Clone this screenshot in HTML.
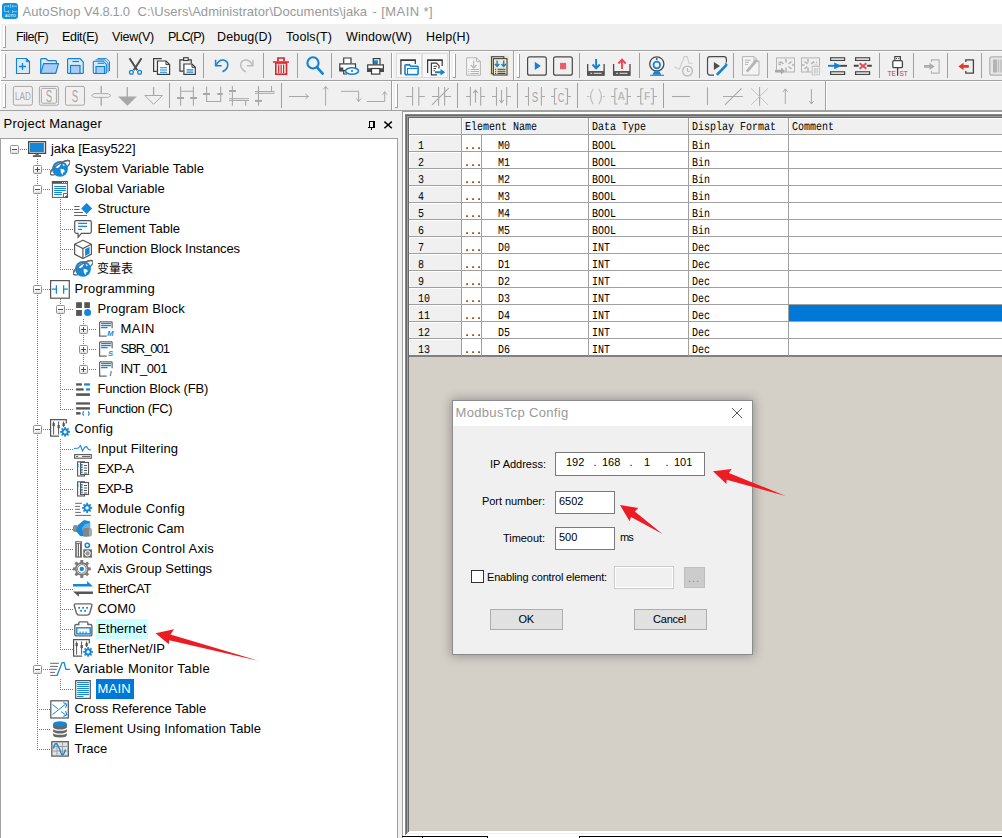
<!DOCTYPE html>
<html><head><meta charset="utf-8"><title>AutoShop</title>
<style>
html,body{margin:0;padding:0}
body{width:1002px;height:838px;position:relative;overflow:hidden;background:#f0f0f0;font-family:"Liberation Sans","Noto Sans CJK SC",sans-serif;color:#000}
div,span,svg{position:absolute;box-sizing:border-box}
.t{white-space:pre;line-height:1}
.tr{font-size:13px;white-space:pre;line-height:16px;height:16px}
.mono{font-family:"Liberation Mono",monospace;font-size:10px;white-space:pre;line-height:12px;text-rendering:geometricPrecision;transform:scaleY(1.2);transform-origin:0 100%;letter-spacing:0}
.vs{width:1px;background:#a0a0a0}
.dl{font-size:11px;white-space:pre;line-height:13px}
.hd{height:1px;background:repeating-linear-gradient(90deg,#7a7a7a 0,#7a7a7a 1px,transparent 1px,transparent 2px)}
.vd{width:1px;background:repeating-linear-gradient(180deg,#7a7a7a 0,#7a7a7a 1px,transparent 1px,transparent 2px)}
.box{width:9px;height:9px;border:1px solid #919191;background:linear-gradient(#fff 45%,#dedede);border-radius:1.5px}
.box i{position:absolute;left:1px;top:3px;width:5px;height:1px;background:#2d4d9e}
.box b{position:absolute;left:3px;top:1px;width:1px;height:5px;background:#2d4d9e}
</style></head><body>

<div style="left:0;top:0;width:1002px;height:24px;background:#fff"></div>
<svg style="left:2px;top:3px" width="16" height="16" viewBox="0 0 16 16" ><rect x="0" y="0" width="16" height="16" rx="3" fill="#0f93de"/><path d="M2.400 3.200H6.600M6.600 2V4.400M8.500 1.200V4.700M10.500 2V4.400M10.500 3.200H15M2.400 3.200V8.600H6.600M6.600 7.300V9.900M10.500 7.300V9.900M10.500 8.600H15" stroke="#9bd6f5" stroke-width="0.800" fill="none"/><text x="8.300" y="13.900" font-family="Liberation Sans,sans-serif" font-weight="bold" font-size="3.900" fill="#d4eefb" text-anchor="middle">AUTO</text></svg>
<span class="t" style="left:22.5px;top:4.5px;font-size:13px;color:#999;letter-spacing:0.112px">AutoShop</span>
<span class="t" style="left:84.0px;top:4.5px;font-size:13px;color:#999;letter-spacing:-0.366px">V4.8.1.0</span>
<span class="t" style="left:137.5px;top:4.5px;font-size:13px;color:#999;letter-spacing:0.052px">C:\Users\Administrator\Documents\jaka</span>
<span class="t" style="left:372.5px;top:4.5px;font-size:13px;color:#999;letter-spacing:0.416px">- [MAIN *]</span>
<div style="left:1px;top:24px;width:1001px;height:26px;background:#f0f0f0"></div>
<div style="left:0;top:24px;width:1px;height:86px;background:#fff"></div>
<div style="left:3px;top:26px;width:2px;height:21px;background:#fff"></div><div style="left:5px;top:26px;width:1px;height:22px;background:#a0a0a0"></div><div style="left:3px;top:47px;width:3px;height:1px;background:#a0a0a0"></div>
<span class="t" style="left:16px;top:30.5px;font-size:12.5px;letter-spacing:-0.586px">File(F)</span>
<span class="t" style="left:62px;top:30.5px;font-size:12.5px;letter-spacing:-0.315px">Edit(E)</span>
<span class="t" style="left:112px;top:30.5px;font-size:12.5px;letter-spacing:-0.219px">View(V)</span>
<span class="t" style="left:168px;top:30.5px;font-size:12.5px;letter-spacing:-0.830px">PLC(P)</span>
<span class="t" style="left:217px;top:30.5px;font-size:12.5px;letter-spacing:0.101px">Debug(D)</span>
<span class="t" style="left:286px;top:30.5px;font-size:12.5px;letter-spacing:0.107px">Tools(T)</span>
<span class="t" style="left:346px;top:30.5px;font-size:12.5px;letter-spacing:0.157px">Window(W)</span>
<span class="t" style="left:426px;top:30.5px;font-size:12.5px;letter-spacing:0.134px">Help(H)</span>
<div style="left:1px;top:50px;width:1001px;height:1px;background:#a0a0a0"></div>
<div style="left:1px;top:51px;width:1001px;height:1px;background:#fcfcfc"></div>
<div style="left:1px;top:80px;width:1001px;height:1px;background:#a0a0a0"></div>
<div style="left:1px;top:81px;width:1001px;height:1px;background:#fcfcfc"></div>
<div style="left:0px;top:110px;width:402px;height:1px;background:#a0a0a0"></div>
<div style="left:402px;top:110px;width:600px;height:2px;background:#a0a0a0"></div>
<div style="left:3px;top:54px;width:2px;height:23px;background:#fff"></div><div style="left:5px;top:54px;width:1px;height:24px;background:#a0a0a0"></div><div style="left:3px;top:77px;width:3px;height:1px;background:#a0a0a0"></div>
<div class="vs" style="left:117px;top:53px;height:25px"></div>
<div class="vs" style="left:203px;top:53px;height:25px"></div>
<div class="vs" style="left:263px;top:53px;height:25px"></div>
<div class="vs" style="left:297px;top:53px;height:25px"></div>
<div class="vs" style="left:331px;top:53px;height:25px"></div>
<div class="vs" style="left:579px;top:53px;height:25px"></div>
<div class="vs" style="left:639px;top:53px;height:25px"></div>
<div class="vs" style="left:699px;top:53px;height:25px"></div>
<div class="vs" style="left:733px;top:53px;height:25px"></div>
<div class="vs" style="left:767px;top:53px;height:25px"></div>
<div class="vs" style="left:879px;top:53px;height:25px"></div>
<div class="vs" style="left:913px;top:53px;height:25px"></div>
<div class="vs" style="left:947px;top:53px;height:25px"></div>
<div class="vs" style="left:981px;top:53px;height:25px"></div>
<div style="left:391px;top:53px;width:1px;height:25px;background:#a0a0a0"></div><div style="left:392px;top:53px;width:1px;height:25px;background:#fff"></div>
<div style="left:396px;top:53px;width:26px;height:25px;background:#f7f7f7;border:1px solid #dcdcdc"></div>
<div style="left:422px;top:53px;width:26px;height:25px;background:#f7f7f7;border:1px solid #dcdcdc"></div>
<div style="left:449px;top:51px;width:1px;height:29px;background:#a0a0a0"></div><div style="left:450px;top:51px;width:1px;height:29px;background:#fff"></div>
<div style="left:453px;top:54px;width:2px;height:23px;background:#fff"></div><div style="left:455px;top:54px;width:1px;height:24px;background:#a0a0a0"></div><div style="left:453px;top:77px;width:3px;height:1px;background:#a0a0a0"></div>
<div style="left:513px;top:51px;width:1px;height:29px;background:#a0a0a0"></div><div style="left:514px;top:51px;width:1px;height:29px;background:#fff"></div>
<div style="left:517px;top:54px;width:2px;height:23px;background:#fff"></div><div style="left:519px;top:54px;width:1px;height:24px;background:#a0a0a0"></div><div style="left:517px;top:77px;width:3px;height:1px;background:#a0a0a0"></div>
<svg style="left:0px;top:50px" width="1002" height="30" viewBox="0 50 1002 30" ><path d="M16.5 58.5H26.5L29.5 61.5V73.5H16.5Z" stroke="#1282d6" fill="#d8e9f8" stroke-width="1.1" /><path d="M26.3 58.5V61.7H29.5Z" stroke="#1282d6" fill="#1282d6" stroke-width="0.6" /><path d="M22.5 63V70M19 66.5H26" stroke="#1282d6" fill="none" stroke-width="1.3" /><path d="M40.7 73V59.5Q40.700 58.600 41.600 58.600H46L48 60.600H55.500Q56.400 60.600 56.400 61.500V63.500" stroke="#1282d6" fill="#d8e9f8" stroke-width="1.2" /><path d="M40.800 73.400L43.600 63.600H58.500L55.700 73.400Z" stroke="#1282d6" fill="#a9cdf2" stroke-width="1.2" stroke-linejoin="round"/><path d="M68.500 58.600H80L83.300 62V72.500Q83.300 73.400 82.400 73.400H68.500Q67.600 73.400 67.600 72.500V59.500Q67.600 58.600 68.500 58.600Z" stroke="#1282d6" fill="#d8e9f8" stroke-width="1.2" /><rect x="70.5" y="65.5" width="9.5" height="8" rx="0" stroke="#1282d6" fill="#a9cdf2" stroke-width="1.2"/><path d="M72.500 61.500H79" stroke="#1282d6" fill="none" stroke-width="1.2" /><path d="M97.500 58.600H106.500L109.500 61.700V71" stroke="#1282d6" fill="#eaf3fb" stroke-width="1" /><path d="M95.500 59.900H105L108 62.900V72.500" stroke="#1282d6" fill="#eaf3fb" stroke-width="1" /><path d="M94.200 61.200H103.400L106.300 64.200V72.500Q106.300 73.400 105.400 73.400H94.200Q93.300 73.400 93.300 72.500V62.100Q93.300 61.200 94.200 61.200Z" stroke="#1282d6" fill="#d8e9f8" stroke-width="1.1" /><rect x="96" y="66.5" width="8.5" height="7" rx="0" stroke="#1282d6" fill="#a9cdf2" stroke-width="1.1"/><path d="M97.600 63.300H104" stroke="#1282d6" fill="none" stroke-width="1.1" /><path d="M129.500 58.200L137.300 70.200M141.500 58.200L133.700 70.200" stroke="#4d4d4d" fill="none" stroke-width="2" /><circle cx="131.4" cy="72.3" r="1.9" stroke="#1282d6" fill="none" stroke-width="1.3"/><circle cx="139.6" cy="72.3" r="1.9" stroke="#1282d6" fill="none" stroke-width="1.3"/><path d="M161.700 58.700H153.600V71.300H156.800" stroke="#3b3b3b" fill="none" stroke-width="1.2" /><path d="M157.500 61H166L169.600 64.600V74.400H157.500Z" stroke="#3b3b3b" fill="#fff" stroke-width="1.2" /><path d="M166 61V64.600H169.600" stroke="#3b3b3b" fill="none" stroke-width="1" /><path d="M160 67.800H167M160 70H167M160 72.200H167" stroke="#1282d6" fill="none" stroke-width="1.1" /><path d="M183.500 71.200H179.900V59.800H191.200V63.400" stroke="#3b3b3b" fill="none" stroke-width="1.2" /><rect x="183.6" y="57.7" width="4.6" height="2.8" rx="0" stroke="#3b3b3b" fill="#f0f0f0" stroke-width="1.1"/><path d="M183.900 64H192L195.300 67.300V74.400H183.900Z" stroke="#3b3b3b" fill="#fff" stroke-width="1.2" /><path d="M192 64V67.300H195.300" stroke="#3b3b3b" fill="none" stroke-width="1" /><path d="M186.600 69.800H193.300M186.600 72.200H193.300" stroke="#1282d6" fill="none" stroke-width="1.2" /><path d="M216.200 65.300Q218.500 59.600 223.500 60Q228.800 61.300 227.600 66.500Q226.300 70.300 222.500 71.800" stroke="#1282d6" fill="none" stroke-width="1.5" /><path d="M215.600 59.800V65.800H221.600" stroke="#1282d6" fill="none" stroke-width="1.5" /><path d="M252.300 65.300Q250 59.600 245 60Q239.700 61.300 240.900 66.500Q242.200 70.300 246 71.800" stroke="#bcbcbc" fill="none" stroke-width="1.4" /><path d="M252.900 59.800V65.800H246.900" stroke="#bcbcbc" fill="none" stroke-width="1.4" /><path d="M272.900 62H289M278 61V58H284V61" stroke="#d9262c" fill="none" stroke-width="1.7" /><rect x="275.8" y="63" width="10.7" height="11.2" rx="0" stroke="#d9262c" fill="none" stroke-width="1.6"/><path d="M278.700 64.500V73M281.150 64.500V73M283.600 64.500V73" stroke="#d9262c" fill="none" stroke-width="1.2" /><circle cx="313" cy="62.9" r="5.6" stroke="#1282d6" fill="none" stroke-width="2.1"/><path d="M317.300 67.600L322.700 73.600" stroke="#1282d6" fill="none" stroke-width="2.6" stroke-linecap="round"/><path d="M343.700 63.400V58H351V63.400" stroke="#3b3b3b" fill="#fff" stroke-width="1.2" /><rect x="339.8" y="63.9" width="15.7" height="6.6" rx="0" stroke="#3b3b3b" fill="#fff" stroke-width="1.2"/><rect x="339.3" y="67.5" width="4" height="4" rx="0" stroke="none" fill="#4a4a4a" stroke-width="1"/><path d="M343.700 71V74H347" stroke="#3b3b3b" fill="none" stroke-width="1.2" /><ellipse cx="352" cy="71" rx="6.500" ry="3.300" fill="#fff" stroke="#1282d6" stroke-width="1.600"/><rect x="351.1" y="70.1" width="1.8" height="1.8" rx="0" stroke="none" fill="#1282d6" stroke-width="1"/><path d="M373.300 64.400V58.700H380V64.400" stroke="#3b3b3b" fill="#fff" stroke-width="1.2" /><rect x="373.9" y="60.3" width="4" height="4.1" rx="0" stroke="none" fill="#1282d6" stroke-width="1"/><rect x="367.7" y="64.9" width="15.7" height="6.4" rx="0" stroke="#3b3b3b" fill="#fff" stroke-width="1.2"/><rect x="367.1" y="68.2" width="4" height="3.6" rx="0" stroke="none" fill="#4a4a4a" stroke-width="1"/><rect x="380.1" y="68.2" width="3.9" height="3.6" rx="0" stroke="none" fill="#4a4a4a" stroke-width="1"/><rect x="371.5" y="68.5" width="8.3" height="5.6" rx="0" stroke="#3b3b3b" fill="#fff" stroke-width="1.2"/><path d="M400.900 74.500V60.500H415.300V64" stroke="#3b3b3b" fill="none" stroke-width="1.2" /><path d="M400.300 60.100H415.900" stroke="#3b3b3b" fill="none" stroke-width="1.7" /><path d="M405 74.500V65.800Q405 64.900 405.900 64.900H409.500L410.800 66.300H417.200Q418.100 66.300 418.100 67.200V74.500" stroke="#1282d6" fill="#fff" stroke-width="1.6" /><path d="M405 74.600H418.100" stroke="#1282d6" fill="none" stroke-width="1.6" /><path d="M407.500 74V68.500H417.500" stroke="#1282d6" fill="none" stroke-width="1.1" /><path d="M427.600 73V60.500H442.200V66" stroke="#3b3b3b" fill="none" stroke-width="1.2" /><path d="M427 60.100H442.800" stroke="#3b3b3b" fill="none" stroke-width="1.7" /><path d="M437 74.800H431.400V63.200H436.500L439 65.700V68.500" stroke="#3b3b3b" fill="#fff" stroke-width="1.2" /><path d="M433.500 66.300H437M433.500 68.500H436M433.500 70.700H435" stroke="#3b3b3b" fill="none" stroke-width="1" /><path d="M435 71.300H440.500V69L445.200 72.300L440.500 75.600V73.300H435Z" stroke="none" fill="#1282d6" stroke-width="1" /><path d="M466.600 57.800H476.500L480.400 61.700V75.200H466.600Z" stroke="#b4b4b4" fill="#f5f5f5" stroke-width="1" /><path d="M476.500 57.800V61.700H480.400" stroke="#b4b4b4" fill="none" stroke-width="1" /><path d="M473.700 60.500V67.800M470.800 65L473.700 68L476.600 65" stroke="#b4b4b4" fill="none" stroke-width="1.1" /><path d="M470.500 69.500H479M470.500 71.500H479M470.500 73.500H479M468.300 69.500H469.300M468.300 71.500H469.300M468.300 73.500H469.300" stroke="#b4b4b4" fill="none" stroke-width="1" /><rect x="489.5" y="55.7" width="19.3" height="20" rx="0" stroke="none" fill="#ece5c9" stroke-width="1"/><rect x="491.6" y="56.7" width="12.2" height="17" rx="0" stroke="#444" fill="#ece5c9" stroke-width="1.1"/><rect x="493.4" y="58.6" width="13.6" height="16.4" rx="0" stroke="#444" fill="#f1ebd3" stroke-width="1.1"/><path d="M497.100 60.500V66M494.900 64L497.100 66.400L499.300 64M503.700 60.500V66M501.500 64L503.700 66.400L505.900 64" stroke="#1282d6" fill="none" stroke-width="1.4" /><path d="M497.500 69.200H505.500M497.500 71.300H505.500M497.500 73.400H505.500M495 69.200H496.200M495 71.300H496.200M495 73.400H496.200" stroke="#444" fill="none" stroke-width="1.1" /><rect x="527.6" y="56.8" width="18.7" height="18.4" rx="2" stroke="#4a4a4a" fill="none" stroke-width="1.2"/><path d="M534.800 61.700L540.800 65.900L534.800 70.100Z" stroke="none" fill="#1282d6" stroke-width="1" /><rect x="553.6" y="56.8" width="18.7" height="18.4" rx="2" stroke="#4a4a4a" fill="none" stroke-width="1.2"/><rect x="560" y="62.9" width="6.1" height="6.3" rx="0" stroke="none" fill="#e9606b" stroke-width="1"/><path d="M587.7 64.100V75.100H604.1V64.100" stroke="#4a4a4a" fill="none" stroke-width="1.3" /><rect x="587.7" y="71" width="16.4" height="4.5" rx="0" stroke="none" fill="#555" stroke-width="1"/><path d="M590.2 73.300H592.2M593.7 73.300H601.7" stroke="#e4e4e4" fill="none" stroke-width="1" /><path d="M596.1 59V67" stroke="#1282d6" fill="none" stroke-width="1.9" /><path d="M592.5 64.500L596.1 68.400L599.7 64.500" stroke="#1282d6" fill="none" stroke-width="1.9" /><path d="M613.6 64.100V75.100H630V64.100" stroke="#4a4a4a" fill="none" stroke-width="1.3" /><rect x="613.6" y="71" width="16.4" height="4.5" rx="0" stroke="none" fill="#555" stroke-width="1"/><path d="M616.1 73.300H618.1M619.6 73.300H627.6" stroke="#e4e4e4" fill="none" stroke-width="1" /><path d="M622 60.500V69" stroke="#ef4450" fill="none" stroke-width="1.9" /><path d="M618.4 63.500L622 59.600L625.6 63.500" stroke="#ef4450" fill="none" stroke-width="1.9" /><circle cx="656.8" cy="63.9" r="7.1" stroke="#4a4a4a" fill="none" stroke-width="1.3"/><circle cx="656.8" cy="65" r="3.3" stroke="#1282d6" fill="none" stroke-width="1.7"/><circle cx="656.8" cy="59" r="0.9" stroke="none" fill="#4a4a4a" stroke-width="1"/><path d="M654.300 71.300H659.300L661.300 74.800H652.300Z" stroke="none" fill="#1282d6" stroke-width="1" /><path d="M650.200 75.300H664" stroke="#1282d6" fill="none" stroke-width="1.1" /><path d="M674.300 66.800L679.400 69.200L684.200 56.600H687.200L689 63.200H692.800" stroke="#cdcdcd" fill="none" stroke-width="1.1" /><circle cx="687.5" cy="71" r="4.9" stroke="#b9b9b9" fill="#f0f0f0" stroke-width="1.3"/><path d="M687.500 68V71.300H690" stroke="#b9b9b9" fill="none" stroke-width="1.1" /><path d="M714 75.100H710Q707.500 75.100 707.500 72.600V59.100Q707.500 56.600 710 56.600H723.900Q726.400 56.600 726.400 59.100V62.500" stroke="#4a4a4a" fill="none" stroke-width="1.2" /><path d="M713.900 62L720 66L713.900 70Z" stroke="none" fill="#4d4d4d" stroke-width="1" /><path d="M716.900 74.900L726.500 64.900" stroke="#1282d6" fill="none" stroke-width="2.7" /><path d="M725.200 63.300L727.200 65.300" stroke="#1282d6" fill="none" stroke-width="1.5" /><path d="M742.500 56.600H754L759 61.600V75.100H742.500Z" stroke="#b4b4b4" fill="#f4f4f4" stroke-width="1" /><path d="M745 60.200H750.600M745 62.300H749M745 64.400H748" stroke="#b4b4b4" fill="none" stroke-width="1" /><path d="M746.800 71.600L756.700 60" stroke="#b4b4b4" fill="none" stroke-width="2.7" /><path d="M754 56.600V61.600H759" stroke="#b4b4b4" fill="none" stroke-width="1" /><rect x="776.5" y="57.9" width="18" height="14.1" rx="0" stroke="#b4b4b4" fill="none" stroke-width="1"/><path d="M786 59V62.500M786 67.500V72M780.500 61.500L783.500 64M791.500 61.500L788.500 64M791.500 69L788.500 66.500M792 65H794M778.500 62.500H781M778.500 64.500H781" stroke="#b4b4b4" fill="none" stroke-width="1.5" /><path d="M775 69.800H781V67.500L785 71L781 74.500V72.200H775Z" stroke="none" fill="#a9a9a9" stroke-width="1" /><rect x="801.5" y="57.9" width="18" height="14.1" rx="0" stroke="#b4b4b4" fill="none" stroke-width="1"/><path d="M808 59V62.500M808 67.500V72M804.500 61.500L807.500 64M814 61.500L811 64M804.500 69L807 66.500M802 65H804.500M812 62.500H814.500M816 62.500H817" stroke="#b4b4b4" fill="none" stroke-width="1.5" /><rect x="812.2" y="66.5" width="7.2" height="8.3" rx="0" stroke="#c6c6c6" fill="#f0f0f0" stroke-width="1"/><path d="M811.500 66.500H820M814 66V65H817.500V66M814.400 68V73.500M815.800 68V73.500M817.300 68V73.500" stroke="#c6c6c6" fill="none" stroke-width="0.9" /><rect x="830.6" y="57.8" width="14" height="2.6" rx="0" stroke="#444" fill="#fff" stroke-width="1.2"/><rect x="830.6" y="71.8" width="14" height="2.6" rx="0" stroke="#444" fill="#fff" stroke-width="1.2"/><path d="M839.500 65.800H847" stroke="#444" fill="none" stroke-width="1.9" /><path d="M828 65.800H836" stroke="#1282d6" fill="none" stroke-width="1.9" /><path d="M834.200 62.400L841.500 65.800L834.200 69.300Z" stroke="none" fill="#1282d6" stroke-width="1" /><rect x="855.6" y="57.8" width="14" height="2.6" rx="0" stroke="#444" fill="#fff" stroke-width="1.2"/><rect x="855.6" y="71.8" width="14" height="2.6" rx="0" stroke="#444" fill="#fff" stroke-width="1.2"/><path d="M853.800 65.800H858.600M867.200 65.800H871.800" stroke="#444" fill="none" stroke-width="1.9" /><path d="M859.600 63.300L866.400 68.800M866.400 63.300L859.600 68.800" stroke="#e05058" fill="none" stroke-width="2" /><rect x="894.8" y="56.6" width="5.6" height="4" rx="0" stroke="#444" fill="#fff" stroke-width="1.2"/><rect x="896" y="58" width="1.1" height="1.1" rx="0" stroke="none" fill="#444" stroke-width="1"/><rect x="898.2" y="58" width="1.1" height="1.1" rx="0" stroke="none" fill="#444" stroke-width="1"/><rect x="892.8" y="60.6" width="9.6" height="7" rx="1.2" stroke="#444" fill="#fff" stroke-width="1.3"/><path d="M897.600 67.600V75.700" stroke="#444" fill="none" stroke-width="1.3" /><text transform="translate(891.7 75.8) scale(1 1)" font-family="Liberation Sans,sans-serif" font-size="6.6" font-weight="normal" fill="#e8242e" text-anchor="middle">TE</text><text transform="translate(903.6 75.8) scale(1 1)" font-family="Liberation Sans,sans-serif" font-size="6.6" font-weight="normal" fill="#e8242e" text-anchor="middle">ST</text><path d="M931.500 62V59.900H939.100V73.100H931.500V71" stroke="#b4b4b4" fill="none" stroke-width="1.2" /><path d="M924 65H929.500V62.800L934.700 66.400L929.500 70V67.800H924Z" stroke="none" fill="#adadad" stroke-width="1" /><path d="M965.800 62V59.900H973.400V73.100H965.800V71" stroke="#444" fill="none" stroke-width="1.3" /><path d="M968.800 65H963.500V62.800L958.300 66.400L963.500 70V67.800H968.800Z" stroke="none" fill="#e73828" stroke-width="1" /><rect x="989.8" y="56.8" width="20" height="18.4" rx="2" stroke="#b0b0b0" fill="#e6e6e6" stroke-width="1.2"/><rect x="993" y="59.5" width="4" height="13" rx="0" stroke="none" fill="#b4b4b4" stroke-width="1"/><path d="M998.500 59.500V72.500M1001 59.500V72.500" stroke="#bdbdbd" fill="none" stroke-width="1.5" /></svg>
<div style="left:3px;top:84px;width:2px;height:23px;background:#fff"></div><div style="left:5px;top:84px;width:1px;height:24px;background:#a0a0a0"></div><div style="left:3px;top:107px;width:3px;height:1px;background:#a0a0a0"></div>
<div class="vs" style="left:169px;top:83px;height:25px"></div>
<div class="vs" style="left:281px;top:83px;height:25px"></div>
<div class="vs" style="left:457px;top:83px;height:25px"></div>
<div class="vs" style="left:517px;top:83px;height:25px"></div>
<div class="vs" style="left:577px;top:83px;height:25px"></div>
<div class="vs" style="left:663px;top:83px;height:25px"></div>
<div style="left:391px;top:81px;width:1px;height:29px;background:#a0a0a0"></div><div style="left:392px;top:81px;width:1px;height:29px;background:#fff"></div>
<div style="left:395px;top:84px;width:2px;height:23px;background:#fff"></div><div style="left:397px;top:84px;width:1px;height:24px;background:#a0a0a0"></div><div style="left:395px;top:107px;width:3px;height:1px;background:#a0a0a0"></div>
<div style="left:825px;top:81px;width:1px;height:29px;background:#a0a0a0"></div><div style="left:826px;top:81px;width:1px;height:29px;background:#fff"></div>
<svg style="left:0px;top:80px" width="1002" height="32" viewBox="0 80 1002 32" ><rect x="13.4" y="86.4" width="19" height="18.8" rx="1.5" stroke="#a8a8a8" fill="none" stroke-width="1"/><text transform="translate(22.9 99.8) scale(0.74 1)" font-family="Liberation Sans,sans-serif" font-size="11" font-weight="normal" fill="#a8a8a8" text-anchor="middle">LAD</text><rect x="39.4" y="86.4" width="19" height="18.8" rx="1.5" stroke="#a8a8a8" fill="none" stroke-width="1"/><rect x="41.4" y="88.4" width="15" height="14.8" rx="1" stroke="#a8a8a8" fill="none" stroke-width="1"/><text transform="translate(48.9 102.3) scale(0.58 1)" font-family="Liberation Sans,sans-serif" font-size="16.5" font-weight="normal" fill="#a8a8a8" text-anchor="middle">S</text><rect x="65.5" y="86.4" width="19" height="18.8" rx="1.5" stroke="#a8a8a8" fill="none" stroke-width="1"/><text transform="translate(75 102.3) scale(0.58 1)" font-family="Liberation Sans,sans-serif" font-size="16.5" font-weight="normal" fill="#a8a8a8" text-anchor="middle">S</text><path d="M101.200 86V105.700" stroke="#a8a8a8" fill="none" stroke-width="1.4" /><path d="M91.500 95.500L94 93.600H108.300L110.800 95.500L108.300 97.400H94Z" stroke="#a8a8a8" fill="#f0f0f0" stroke-width="0.9" /><path d="M127.300 87.100V97" stroke="#a8a8a8" fill="none" stroke-width="1.3" /><path d="M118 96.500H136.800L127.400 105.700Z" stroke="none" fill="#a8a8a8" stroke-width="1" /><path d="M153.600 87.100V95.500" stroke="#a8a8a8" fill="none" stroke-width="1.3" /><path d="M144.800 95.500H162.400L153.600 104.300Z" stroke="#a8a8a8" fill="none" stroke-width="1" /><path d="M180.600 86.500V105.700M193.400 86.500V105.700M180.600 91.300H193.400" stroke="#a8a8a8" fill="none" stroke-width="1.1" /><path d="M177 97.900H184M190.200 97.900H197" stroke="#a8a8a8" fill="none" stroke-width="2" /><path d="M206.600 86.500V101.500H220.700V86.500" stroke="#a8a8a8" fill="none" stroke-width="1.1" /><path d="M203 94.100H210M217.200 94.100H222.800" stroke="#a8a8a8" fill="none" stroke-width="2" /><path d="M232.400 86V105.700M245.600 100V105.700" stroke="#a8a8a8" fill="none" stroke-width="1.1" /><path d="M229 91H236" stroke="#a8a8a8" fill="none" stroke-width="2" /><path d="M229 98.700H249M229 100.500H249" stroke="#a8a8a8" fill="none" stroke-width="1" /><path d="M229 94H230" stroke="#a8a8a8" fill="none" stroke-width="1" /><path d="M258.500 86V105.700M271.500 86V91.500" stroke="#a8a8a8" fill="none" stroke-width="1.1" /><path d="M255 91.500H274.700M255 93.300H274.700" stroke="#a8a8a8" fill="none" stroke-width="1" /><path d="M255 100.900H262" stroke="#a8a8a8" fill="none" stroke-width="2" /><path d="M289 96.500H308.500M305.500 94.200L308.500 96.500L305.500 98.800" stroke="#a8a8a8" fill="none" stroke-width="1" /><path d="M325.600 86.500V105.700M323.200 89.500L325.600 86.500L328 89.500" stroke="#a8a8a8" fill="none" stroke-width="1" /><path d="M341 91.300H358.600V101.500M356.300 98.500L358.600 101.500L360.900 98.500" stroke="#a8a8a8" fill="none" stroke-width="1" /><path d="M367 101.500H384.700V91.700M382.400 94.700L384.700 91.700L387 94.700" stroke="#a8a8a8" fill="none" stroke-width="1" /><path d="M405.900 96.500H412.600M418.800 96.500H424.800M412.600 87.100V105.700M418.800 87.100V105.700" stroke="#a8a8a8" fill="none" stroke-width="1.1" /><path d="M432 96.500H438.600M444.600 96.500H451M438.600 87.100V105.700M444.600 87.100V105.700M432 104.900L448.800 88.100" stroke="#a8a8a8" fill="none" stroke-width="1.1" /><path d="M466 96.500H470.400M480.700 96.500H485M470.400 87.100V105.700M480.700 87.100V105.700M475.500 90.100V102.700M473.300 92.800L475.500 90.100L477.700 92.800" stroke="#a8a8a8" fill="none" stroke-width="1.1" /><path d="M492 96.500H496.500M506.700 96.500H510.900M496.500 87.100V105.700M506.700 87.100V105.700M501.500 90.100V102.700M499.300 100L501.500 102.700L503.700 100" stroke="#a8a8a8" fill="none" stroke-width="1.1" /><path d="M525 96.500H528.500M541.400 96.500H545M528.500 87.100V105.700M541.400 87.100V105.700" stroke="#a8a8a8" fill="none" stroke-width="1.1" /><text transform="translate(535 102.1) scale(0.62 1)" font-family="Liberation Sans,sans-serif" font-size="15.5" font-weight="normal" fill="#a8a8a8" text-anchor="middle">S</text><path d="M551 96.500H554.500M567.500 96.500H570.800M557.300 88.800H554.500V104H557.300M564.700 88.800H567.500V104H564.700" stroke="#a8a8a8" fill="none" stroke-width="1.1" /><text transform="translate(561 101.5) scale(0.68 1)" font-family="Liberation Sans,sans-serif" font-size="13.5" font-weight="normal" fill="#a8a8a8" text-anchor="middle">C</text><path d="M587 96.500H589.500M602.800 96.500H604.800M593.200 88.800Q588 96.500 593.200 104.200M598.800 88.800Q604 96.500 598.800 104.200" stroke="#bdbdbd" fill="none" stroke-width="1.1" /><path d="M611 96.500H614.800M627.300 96.500H631M617.500 88.800H614.800V104H617.500M624.600 88.800H627.300V104H624.600" stroke="#a8a8a8" fill="none" stroke-width="1.1" /><text transform="translate(621.2 100.3) scale(0.95 1)" font-family="Liberation Sans,sans-serif" font-size="11" font-weight="bold" fill="#bdbdbd" text-anchor="middle">A</text><path d="M637 96.500H640.800M653.300 96.500H657M643.500 88.800H640.800V104H643.500M650.600 88.800H653.300V104H650.600" stroke="#a8a8a8" fill="none" stroke-width="1.1" /><text transform="translate(647.3 100.3) scale(0.95 1)" font-family="Liberation Sans,sans-serif" font-size="11" font-weight="bold" fill="#bdbdbd" text-anchor="middle">F</text><path d="M672 96.500H690" stroke="#a8a8a8" fill="none" stroke-width="1.1" /><path d="M707.500 87.400V104.900" stroke="#a8a8a8" fill="none" stroke-width="1.1" /><path d="M723 96.500H742.800M724.900 104.900L741.600 88.300" stroke="#a8a8a8" fill="none" stroke-width="1.1" /><path d="M759.600 87V105.700" stroke="#a8a8a8" fill="none" stroke-width="1.1" /><path d="M751 88.300L768 104.900M768 88.300L751 104.900" stroke="#c4c4c4" fill="none" stroke-width="1" /><path d="M785.300 88.900V103.900M783 91.800L785.300 88.900L787.600 91.800" stroke="#a8a8a8" fill="none" stroke-width="1" /><path d="M811.400 88.900V103.900M809.100 101L811.400 103.900L813.700 101" stroke="#a8a8a8" fill="none" stroke-width="1" /></svg>
<div style="left:402px;top:111px;width:1px;height:727px;background:#a0a0a0"></div>
<div style="left:403px;top:112px;width:2px;height:726px;background:#fff"></div>
<div style="left:403px;top:112px;width:599px;height:2px;background:#fff"></div>
<span class="t" style="left:3.5px;top:117px;font-size:13px;letter-spacing:0.208px">Project Manager</span>
<svg style="left:365px;top:119px" width="12" height="12" viewBox="0 0 12 12" ><path d="M4 2.500H9M4.500 2V8M8 2V8M9 2V8M3 8.500H10M6.500 9V10.700" stroke="#000" stroke-width="1" fill="none" shape-rendering="crispEdges"/></svg>
<svg style="left:383px;top:120px" width="10" height="10" viewBox="0 0 10 10" ><path d="M1.400 1.600L8.800 8.200M8.800 1.600L1.400 8.200" stroke="#000" stroke-width="1.500" fill="none"/></svg>
<div style="left:0;top:138px;width:398px;height:700px;background:#fff;border:1px solid #a0a0a0;border-bottom:0"></div>
<div class="vd" style="left:37px;top:159px;height:591px"></div>
<div class="vd" style="left:60px;top:199px;height:71px"></div>
<div class="vd" style="left:60px;top:299px;height:111px"></div>
<div class="vd" style="left:83px;top:319px;height:51px"></div>
<div class="vd" style="left:60px;top:439px;height:211px"></div>
<div class="vd" style="left:60px;top:679px;height:11px"></div>
<div class="hd" style="left:20px;top:149px;width:7px"></div>
<div class="box" style="left:10px;top:145px"><i></i></div>
<svg style="left:27px;top:139px" width="20" height="20" viewBox="0 0 20 20" ><rect x="1.7" y="2.7" width="16.8" height="11.6" rx="0" stroke="#4a4a4a" fill="#fff" stroke-width="1.4"/><rect x="3" y="4" width="13.9" height="9" rx="0" stroke="none" fill="#1488d8" stroke-width="1"/><rect x="8.5" y="15" width="3.2" height="1.3" rx="0" stroke="none" fill="#6a6a6a" stroke-width="1"/><rect x="5.9" y="16.2" width="8.2" height="1.8" rx="0" stroke="none" fill="#5a5a5a" stroke-width="1"/></svg>
<span class="tr" style="left:51.0px;top:141px;letter-spacing:-0.056px;">jaka [Easy522]</span>
<div class="hd" style="left:43px;top:169px;width:7px"></div>
<div class="box" style="left:33px;top:165px"><i></i><b></b></div>
<svg style="left:50px;top:159px" width="20" height="20" viewBox="0 0 20 20" ><ellipse cx="10.1" cy="8.7" rx="11.600" ry="3.900" transform="rotate(-34 10.1 8.7)" fill="none" stroke="#6c6c6c" stroke-width="1.400"/><circle cx="10" cy="9.8" r="7.9" stroke="none" fill="#1488d8" stroke-width="1"/><path d="M5.5 6.3 L8.5 4.3 L11 5.3 L9.5 7.8 L7.5 9.3 L5.5 8.3 Z" fill="#fff"/><path d="M10.5 9.8 L13.5 10.3 L15 12.3 L13 13.8 L12.5 16.3 L10.8 13.3 Z" fill="#fff"/><path d="M12.5 4.8 L15 6.3 L13.5 7.3 Z" fill="#fff"/><path d="M0.5 15.2 A11.600 3.900 -34 0 1 19.7 2.2" fill="none" stroke="#6c6c6c" stroke-width="1.400"/></svg>
<span class="tr" style="left:74.5px;top:161px;letter-spacing:0.069px;">System Variable Table</span>
<div class="hd" style="left:43px;top:189px;width:7px"></div>
<div class="box" style="left:33px;top:185px"><i></i></div>
<svg style="left:50px;top:179px" width="20" height="20" viewBox="0 0 20 20" ><rect x="2.4" y="2.6" width="15" height="15.8" rx="0" stroke="#565656" fill="#fff" stroke-width="1"/><rect x="1.9" y="2.1" width="16" height="2.7" rx="0" stroke="none" fill="#565656" stroke-width="1"/><rect x="12.2" y="3" width="1" height="1" rx="0" stroke="none" fill="#fff" stroke-width="1"/><rect x="14" y="3" width="1" height="1" rx="0" stroke="none" fill="#fff" stroke-width="1"/><rect x="15.8" y="3" width="1" height="1" rx="0" stroke="none" fill="#fff" stroke-width="1"/><path d="M4.100 7.500H15.900M4.100 9.500H15.900M4.100 11.500H15.900M4.100 13.500H11.900M4.100 15.500H11.900" stroke="#1488d8" fill="none" stroke-width="1" /><path d="M13.500 18.900L17.900 14.900V18.900Z" stroke="none" fill="#565656" stroke-width="1" /><path d="M13.500 18.400V14.500H17.400" stroke="#565656" fill="#fff" stroke-width="0.9" /></svg>
<span class="tr" style="left:74.5px;top:181px;letter-spacing:0.171px;">Global Variable</span>
<div class="hd" style="left:62px;top:209px;width:11px"></div>
<svg style="left:73px;top:199px" width="20" height="20" viewBox="0 0 20 20" ><path d="M1.100 7.500H6.600M1.100 10.500H6.600M1.100 13.500H10.100M1.100 16.500H14.100" stroke="#565656" fill="none" stroke-width="0.9" /><path d="M13.600 4L19.100 9.500L13.600 15L8.100 9.500Z" stroke="none" fill="#1488d8" stroke-width="1" /></svg>
<span class="tr" style="left:97.5px;top:201px;letter-spacing:-0.005px;">Structure</span>
<div class="hd" style="left:62px;top:229px;width:11px"></div>
<svg style="left:73px;top:219px" width="20" height="20" viewBox="0 0 20 20" ><path d="M3.200 1.600H16.800Q18.300 1.600 18.300 3.100V12.800Q18.300 14.300 16.800 14.300H8.500L5.100 18.100V14.300H3.200Q1.700 14.300 1.700 12.800V3.100Q1.700 1.600 3.200 1.600Z" stroke="#565656" fill="#fff" stroke-width="1.2" /><path d="M5.100 4.400H14.100M5.100 7.400H14.100M5.100 10.400H8.900" stroke="#1488d8" fill="none" stroke-width="1.1" /></svg>
<span class="tr" style="left:97.5px;top:221px;letter-spacing:0.035px;">Element Table</span>
<div class="hd" style="left:62px;top:249px;width:11px"></div>
<svg style="left:73px;top:239px" width="20" height="20" viewBox="0 0 20 20" ><path d="M9.900 1.200L18.400 5.300V15.100L9.900 19.500L1.600 15.100V5.300Z" stroke="#565656" fill="#fff" stroke-width="1.2" stroke-linejoin="round"/><path d="M1.600 5.300L9.900 9.600L18.400 5.300M9.900 9.600V19.500" stroke="#565656" fill="none" stroke-width="1.2" /><path d="M12.100 10.100L16.600 7.900V14.600L12.100 16.900Z" stroke="none" fill="#1488d8" stroke-width="1" /></svg>
<span class="tr" style="left:97.5px;top:241px;letter-spacing:-0.084px;">Function Block Instances</span>
<div class="hd" style="left:62px;top:269px;width:11px"></div>
<svg style="left:73px;top:259px" width="20" height="20" viewBox="0 0 20 20" ><ellipse cx="10.1" cy="8.7" rx="11.600" ry="3.900" transform="rotate(-34 10.1 8.7)" fill="none" stroke="#6c6c6c" stroke-width="1.400"/><circle cx="10" cy="9.8" r="7.9" stroke="none" fill="#1488d8" stroke-width="1"/><path d="M5.5 6.3 L8.5 4.3 L11 5.3 L9.5 7.8 L7.5 9.3 L5.5 8.3 Z" fill="#fff"/><path d="M10.5 9.8 L13.5 10.3 L15 12.3 L13 13.8 L12.5 16.3 L10.8 13.3 Z" fill="#fff"/><path d="M12.5 4.8 L15 6.3 L13.5 7.3 Z" fill="#fff"/><path d="M0.5 15.2 A11.600 3.900 -34 0 1 19.7 2.2" fill="none" stroke="#6c6c6c" stroke-width="1.400"/></svg>
<span class="tr" style="left:97.0px;top:261px;font-size:12px;">变量表</span>
<div class="hd" style="left:43px;top:289px;width:7px"></div>
<div class="box" style="left:33px;top:285px"><i></i></div>
<svg style="left:50px;top:279px" width="20" height="20" viewBox="0 0 20 20" ><rect x="0.6" y="1.6" width="18.7" height="17.6" rx="0" stroke="#565656" fill="#fff" stroke-width="1.2"/><path d="M1.800 10.200H6.400M13.600 10.200H17.900M6.400 6.200V14.800M13.600 6.200V14.800" stroke="#1488d8" fill="none" stroke-width="1.3" /></svg>
<span class="tr" style="left:74.5px;top:281px;letter-spacing:0.225px;">Programming</span>
<div class="hd" style="left:66px;top:309px;width:7px"></div>
<div class="box" style="left:56px;top:305px"><i></i></div>
<svg style="left:73px;top:299px" width="20" height="20" viewBox="0 0 20 20" ><rect x="3.1" y="3.2" width="5.8" height="5.8" rx="0" stroke="none" fill="#565656" stroke-width="1"/><rect x="11.3" y="3.2" width="5.6" height="5.8" rx="0" stroke="none" fill="#565656" stroke-width="1"/><rect x="3.1" y="11" width="5.8" height="5.9" rx="0" stroke="none" fill="#565656" stroke-width="1"/><circle cx="14.6" cy="13.6" r="3.5" stroke="none" fill="#1488d8" stroke-width="1"/></svg>
<span class="tr" style="left:97.5px;top:301px;letter-spacing:0.165px;">Program Block</span>
<div class="hd" style="left:89px;top:329px;width:7px"></div>
<div class="box" style="left:79px;top:325px"><i></i><b></b></div>
<svg style="left:96px;top:319px" width="20" height="20" viewBox="0 0 20 20" ><path d="M3.700 17.600V2.900H16.100V9.300" stroke="#444" fill="#fff" stroke-width="1" /><path d="M3.700 17.100H10.700" stroke="#444" fill="none" stroke-width="1" /><path d="M5.100 4.600H14.900M5.100 6.600H14.900M5.100 8.600H11.600" stroke="#1488d8" fill="none" stroke-width="1.1" /><text x="14.3" y="17" font-family="Liberation Sans,sans-serif" font-size="7.500" font-style="italic" font-weight="bold" fill="#1488d8" text-anchor="middle">M</text></svg>
<span class="tr" style="left:120.5px;top:321px;letter-spacing:0.500px;">MAIN</span>
<div class="hd" style="left:89px;top:349px;width:7px"></div>
<div class="box" style="left:79px;top:345px"><i></i><b></b></div>
<svg style="left:96px;top:339px" width="20" height="20" viewBox="0 0 20 20" ><path d="M3.700 17.600V2.900H16.100V9.300" stroke="#444" fill="#fff" stroke-width="1" /><path d="M3.700 17.100H10.700" stroke="#444" fill="none" stroke-width="1" /><path d="M5.100 4.600H14.900M5.100 6.600H14.900M5.100 8.600H11.600" stroke="#1488d8" fill="none" stroke-width="1.1" /><text x="14.6" y="17" font-family="Liberation Sans,sans-serif" font-size="7.500" font-style="italic" font-weight="bold" fill="#1488d8" text-anchor="middle">S</text></svg>
<span class="tr" style="left:120.5px;top:341px;letter-spacing:-1.022px;">SBR_001</span>
<div class="hd" style="left:89px;top:369px;width:7px"></div>
<div class="box" style="left:79px;top:365px"><i></i><b></b></div>
<svg style="left:96px;top:359px" width="20" height="20" viewBox="0 0 20 20" ><path d="M3.700 17.600V2.900H16.100V9.300" stroke="#444" fill="#fff" stroke-width="1" /><path d="M3.700 17.100H10.700" stroke="#444" fill="none" stroke-width="1" /><path d="M5.100 4.600H14.900M5.100 6.600H14.900M5.100 8.600H11.600" stroke="#1488d8" fill="none" stroke-width="1.1" /><text x="14.6" y="17" font-family="Liberation Sans,sans-serif" font-size="7.500" font-style="italic" font-weight="bold" fill="#1488d8" text-anchor="middle">I</text></svg>
<span class="tr" style="left:120.5px;top:361px;letter-spacing:-0.481px;">INT_001</span>
<div class="hd" style="left:62px;top:389px;width:11px"></div>
<svg style="left:73px;top:379px" width="20" height="20" viewBox="0 0 20 20" ><rect x="3.1" y="4.3" width="5.8" height="2.3" rx="0" stroke="none" fill="#565656" stroke-width="1"/><rect x="11.1" y="4.3" width="5.8" height="2.3" rx="0" stroke="none" fill="#1488d8" stroke-width="1"/><rect x="3.1" y="9.3" width="7.5" height="2.3" rx="0" stroke="none" fill="#565656" stroke-width="1"/><rect x="13.1" y="9.3" width="3.8" height="2.3" rx="0" stroke="none" fill="#1488d8" stroke-width="1"/><rect x="3.1" y="14.3" width="13.8" height="2.6" rx="0" stroke="none" fill="#565656" stroke-width="1"/></svg>
<span class="tr" style="left:97.5px;top:381px;letter-spacing:-0.187px;">Function Block (FB)</span>
<div class="hd" style="left:62px;top:409px;width:11px"></div>
<svg style="left:73px;top:399px" width="20" height="20" viewBox="0 0 20 20" ><rect x="3.1" y="3.3" width="13.8" height="2.3" rx="0" stroke="none" fill="#565656" stroke-width="1"/><rect x="3.1" y="8.2" width="13.8" height="2.4" rx="0" stroke="none" fill="#565656" stroke-width="1"/><rect x="3.1" y="13.1" width="4.5" height="2.5" rx="0" stroke="none" fill="#565656" stroke-width="1"/><path d="M10.700 12.300Q9 14.500 10.700 16.700M15.300 12.300Q17 14.500 15.300 16.700" stroke="#1488d8" fill="none" stroke-width="1.1" /></svg>
<span class="tr" style="left:97.5px;top:401px;letter-spacing:-0.367px;">Function (FC)</span>
<div class="hd" style="left:43px;top:429px;width:7px"></div>
<div class="box" style="left:33px;top:425px"><i></i></div>
<svg style="left:50px;top:419px" width="20" height="20" viewBox="0 0 20 20" ><path d="M16.300 4.500V0.700H0.600V17.100H9" stroke="#565656" fill="none" stroke-width="1.2" /><path d="M3.600 2.500V15.500M8.600 2.500V15.500M13.600 2.500V8" stroke="#565656" fill="none" stroke-width="1" /><rect x="2.5" y="4.1" width="2.3" height="3" rx="0" stroke="none" fill="#565656" stroke-width="1"/><rect x="7.5" y="6.1" width="2.3" height="3" rx="0" stroke="none" fill="#565656" stroke-width="1"/><rect x="12.5" y="4.1" width="2.3" height="3" rx="0" stroke="none" fill="#565656" stroke-width="1"/><path d="M18.60 12.06 L20.04 12.12 L20.04 13.68 L18.60 13.74 L18.17 14.78 L19.15 15.84 L18.04 16.95 L16.98 15.97 L15.94 16.40 L15.88 17.84 L14.32 17.84 L14.26 16.40 L13.22 15.97 L12.16 16.95 L11.05 15.84 L12.03 14.78 L11.60 13.74 L10.16 13.68 L10.16 12.12 L11.60 12.06 L12.03 11.02 L11.05 9.96 L12.16 8.85 L13.22 9.83 L14.26 9.40 L14.32 7.96 L15.88 7.96 L15.94 9.40 L16.98 9.83 L18.04 8.85 L19.15 9.96 L18.17 11.02Z" fill="#1488d8"/><circle cx="15.1" cy="12.9" r="1.6" stroke="none" fill="#fff" stroke-width="1"/></svg>
<span class="tr" style="left:74.5px;top:421px;letter-spacing:0.170px;">Config</span>
<div class="hd" style="left:62px;top:449px;width:11px"></div>
<svg style="left:73px;top:439px" width="20" height="20" viewBox="0 0 20 20" ><path d="M1 9.500L5.500 9L7.500 6.500L9.500 12L11.500 8.500L13.500 7.500L15.500 10.500L18 11" stroke="#1488d8" fill="none" stroke-width="1.1" /><rect x="1.6" y="15.6" width="16.7" height="3.6" rx="0" stroke="#565656" fill="#fff" stroke-width="1.1"/><path d="M3 17.400H5.200M9 17.400H17" stroke="#565656" fill="none" stroke-width="1" /></svg>
<span class="tr" style="left:97.5px;top:441px;letter-spacing:0.122px;">Input Filtering</span>
<div class="hd" style="left:62px;top:469px;width:11px"></div>
<svg style="left:73px;top:459px" width="20" height="20" viewBox="0 0 20 20" ><rect x="4.6" y="2.8" width="6.9" height="14.2" rx="0" stroke="#565656" fill="#fff" stroke-width="1.1"/><rect x="7.5" y="3.5" width="8" height="12" rx="0" stroke="#565656" fill="#fff" stroke-width="1.1"/><path d="M8.800 5V14.500" stroke="#1488d8" fill="none" stroke-width="1.7" stroke-dasharray="1.800 0.700"/><path d="M11 6.500H14M11 9H14M11 11.500H14M11 14H14" stroke="#565656" fill="none" stroke-width="1" /><path d="M5.500 5.500V7.500" stroke="#1488d8" fill="none" stroke-width="1" stroke-dasharray="0.800 0.800"/></svg>
<span class="tr" style="left:97.5px;top:461px;letter-spacing:-0.603px;">EXP-A</span>
<div class="hd" style="left:62px;top:489px;width:11px"></div>
<svg style="left:73px;top:479px" width="20" height="20" viewBox="0 0 20 20" ><rect x="4.6" y="2.8" width="6.9" height="14.2" rx="0" stroke="#565656" fill="#fff" stroke-width="1.1"/><rect x="7.5" y="3.5" width="8" height="12" rx="0" stroke="#565656" fill="#fff" stroke-width="1.1"/><path d="M8.800 5V14.500" stroke="#1488d8" fill="none" stroke-width="1.7" stroke-dasharray="1.800 0.700"/><path d="M11 6.500H14M11 9H14M11 11.500H14M11 14H14" stroke="#565656" fill="none" stroke-width="1" /><path d="M5.500 5.500V7.500" stroke="#1488d8" fill="none" stroke-width="1" stroke-dasharray="0.800 0.800"/></svg>
<span class="tr" style="left:97.5px;top:481px;letter-spacing:-0.803px;">EXP-B</span>
<div class="hd" style="left:62px;top:509px;width:11px"></div>
<svg style="left:73px;top:499px" width="20" height="20" viewBox="0 0 20 20" ><path d="M2.200 4.300H8.900M2.200 7.400H7.100M2.200 10.300H7.100M2.200 13.400H7.900M2.200 16.400H17.900" stroke="#565656" fill="none" stroke-width="0.9" /><path d="M17.70 8.04 L19.14 8.10 L19.14 9.70 L17.70 9.76 L17.25 10.83 L18.23 11.90 L17.10 13.03 L16.03 12.05 L14.96 12.50 L14.90 13.94 L13.30 13.94 L13.24 12.50 L12.17 12.05 L11.10 13.03 L9.97 11.90 L10.95 10.83 L10.50 9.76 L9.06 9.70 L9.06 8.10 L10.50 8.04 L10.95 6.97 L9.97 5.90 L11.10 4.77 L12.17 5.75 L13.24 5.30 L13.30 3.86 L14.90 3.86 L14.96 5.30 L16.03 5.75 L17.10 4.77 L18.23 5.90 L17.25 6.97Z" fill="#1488d8"/><circle cx="14.1" cy="8.9" r="1.7" stroke="none" fill="#fff" stroke-width="1"/></svg>
<span class="tr" style="left:97.5px;top:501px;letter-spacing:0.274px;">Module Config</span>
<div class="hd" style="left:62px;top:529px;width:11px"></div>
<svg style="left:73px;top:519px" width="20" height="20" viewBox="0 0 20 20" ><rect x="0" y="6" width="5" height="7" rx="2" stroke="none" fill="#8c8c8c" stroke-width="1"/><path d="M11.100 1L17.100 2.500V11L14.100 17.500L7.100 17L3 12L5 6Z" stroke="none" fill="#1a8ad6" stroke-width="1" /><path d="M12 5L17.100 4V11L14.100 17.500L10 14L9 9Z" stroke="none" fill="#5bb5ea" stroke-width="1" /><rect x="10" y="9" width="7.5" height="8.5" rx="1.5" stroke="none" fill="#858585" stroke-width="1"/><ellipse cx="17.500" cy="13.200" rx="1.600" ry="4.200" fill="#aaa"/></svg>
<span class="tr" style="left:97.5px;top:521px;letter-spacing:-0.110px;">Electronic Cam</span>
<div class="hd" style="left:62px;top:549px;width:11px"></div>
<svg style="left:73px;top:539px" width="20" height="20" viewBox="0 0 20 20" ><rect x="2.2" y="2.2" width="6.7" height="16.4" rx="0" stroke="none" fill="#666" stroke-width="1"/><path d="M4.300 5V17.500M6.500 5V17.500" stroke="#fff" fill="none" stroke-width="1" /><rect x="3.5" y="3.2" width="4" height="0.9" rx="0" stroke="none" fill="#fff" stroke-width="1"/><rect x="10.3" y="10.3" width="8.6" height="8.3" rx="0" stroke="none" fill="#666" stroke-width="1"/><circle cx="14.6" cy="14.4" r="2.7" stroke="#fff" fill="#999" stroke-width="1"/><circle cx="14.3" cy="6.3" r="2.1" stroke="#1488d8" fill="none" stroke-width="1.5"/></svg>
<span class="tr" style="left:97.5px;top:541px;letter-spacing:0.242px;">Motion Control Axis</span>
<div class="hd" style="left:62px;top:569px;width:11px"></div>
<svg style="left:73px;top:559px" width="20" height="20" viewBox="0 0 20 20" ><path d="M15.41 8.31 L17.79 8.48 L17.79 11.32 L15.41 11.49 L14.60 13.45 L16.16 15.25 L14.15 17.26 L12.35 15.70 L10.39 16.51 L10.22 18.89 L7.38 18.89 L7.21 16.51 L5.25 15.70 L3.45 17.26 L1.44 15.25 L3.00 13.45 L2.19 11.49 L-0.19 11.32 L-0.19 8.48 L2.19 8.31 L3.00 6.35 L1.44 4.55 L3.45 2.54 L5.25 4.10 L7.21 3.29 L7.38 0.91 L10.22 0.91 L10.39 3.29 L12.35 4.10 L14.15 2.54 L16.16 4.55 L14.60 6.35Z" fill="#7a7a7a"/><circle cx="8.8" cy="9.9" r="5.2" stroke="none" fill="#fff" stroke-width="1"/><circle cx="8.8" cy="9.9" r="4.3" stroke="#7a7a7a" fill="#fff" stroke-width="1"/><circle cx="8.8" cy="9.9" r="2.2" stroke="none" fill="#1488d8" stroke-width="1"/></svg>
<span class="tr" style="left:97.5px;top:561px;letter-spacing:-0.015px;">Axis Group Settings</span>
<div class="hd" style="left:62px;top:589px;width:11px"></div>
<svg style="left:73px;top:579px" width="20" height="20" viewBox="0 0 20 20" ><path d="M0 5.100H14.100V1.900L19.900 7.400L14.100 7.600H0Z" stroke="none" fill="#1488d8" stroke-width="1" /><path d="M19.900 12.400H0L5.900 17.700V14.900H19.900Z" stroke="none" fill="#565656" stroke-width="1" /></svg>
<span class="tr" style="left:97.5px;top:581px;letter-spacing:-0.326px;">EtherCAT</span>
<div class="hd" style="left:62px;top:609px;width:11px"></div>
<svg style="left:73px;top:599px" width="20" height="20" viewBox="0 0 20 20" ><path d="M3 4.900H17.200Q19.400 4.900 18.800 7L16.800 14Q16 16.100 14 16.100H6.200Q4.200 16.100 3.400 14L1.400 7Q0.800 4.900 3 4.900Z" stroke="#666" fill="#fff" stroke-width="1.4" /><rect x="5.2" y="7.9" width="1.8" height="1.8" rx="0" stroke="none" fill="#1488d8" stroke-width="1"/><rect x="9.2" y="7.9" width="1.8" height="1.8" rx="0" stroke="none" fill="#1488d8" stroke-width="1"/><rect x="13.2" y="7.9" width="1.8" height="1.8" rx="0" stroke="none" fill="#1488d8" stroke-width="1"/><rect x="7.2" y="10.9" width="1.8" height="1.8" rx="0" stroke="none" fill="#1488d8" stroke-width="1"/><rect x="11.2" y="10.9" width="1.8" height="1.8" rx="0" stroke="none" fill="#1488d8" stroke-width="1"/></svg>
<span class="tr" style="left:97.5px;top:601px;letter-spacing:0.110px;">COM0</span>
<div class="hd" style="left:62px;top:629px;width:11px"></div>
<svg style="left:73px;top:619px" width="20" height="20" viewBox="0 0 20 20" ><path d="M5.800 5.500V4Q5.800 2.900 6.900 2.900H13.800Q14.900 2.900 14.900 4V5.500H17.400Q18.900 5.500 18.900 7V15.400Q18.900 16.900 17.400 16.900H3.300Q1.800 16.900 1.800 15.400V7Q1.800 5.500 3.300 5.500Z" stroke="#666" fill="#fff" stroke-width="1.4" /><rect x="3.8" y="8.8" width="13.4" height="6.1" rx="0" stroke="#1488d8" fill="#fff" stroke-width="1.4"/><path d="M7.100 12.600V15M10.100 12.600V15M13.100 12.600V15" stroke="#1488d8" fill="none" stroke-width="1.2" /></svg>
<div style="left:96px;top:619px;width:52px;height:20px;background:#ccffff"></div>
<span class="tr" style="left:97.5px;top:621px;letter-spacing:-0.056px;">Ethernet</span>
<div class="hd" style="left:62px;top:649px;width:11px"></div>
<svg style="left:73px;top:639px" width="20" height="20" viewBox="0 0 20 20" ><path d="M16.300 4.500V0.700H0.600V17.100H9" stroke="#565656" fill="none" stroke-width="1.2" /><path d="M3.600 2.500V15.500M8.600 2.500V15.500M13.600 2.500V8" stroke="#565656" fill="none" stroke-width="1" /><rect x="2.5" y="4.1" width="2.3" height="3" rx="0" stroke="none" fill="#565656" stroke-width="1"/><rect x="7.5" y="6.1" width="2.3" height="3" rx="0" stroke="none" fill="#565656" stroke-width="1"/><rect x="12.5" y="4.1" width="2.3" height="3" rx="0" stroke="none" fill="#565656" stroke-width="1"/><path d="M18.60 12.06 L20.04 12.12 L20.04 13.68 L18.60 13.74 L18.17 14.78 L19.15 15.84 L18.04 16.95 L16.98 15.97 L15.94 16.40 L15.88 17.84 L14.32 17.84 L14.26 16.40 L13.22 15.97 L12.16 16.95 L11.05 15.84 L12.03 14.78 L11.60 13.74 L10.16 13.68 L10.16 12.12 L11.60 12.06 L12.03 11.02 L11.05 9.96 L12.16 8.85 L13.22 9.83 L14.26 9.40 L14.32 7.96 L15.88 7.96 L15.94 9.40 L16.98 9.83 L18.04 8.85 L19.15 9.96 L18.17 11.02Z" fill="#1488d8"/><circle cx="15.1" cy="12.9" r="1.6" stroke="none" fill="#fff" stroke-width="1"/></svg>
<span class="tr" style="left:97.5px;top:641px;letter-spacing:0.027px;">EtherNet/IP</span>
<div class="hd" style="left:43px;top:669px;width:7px"></div>
<div class="box" style="left:33px;top:665px"><i></i></div>
<svg style="left:50px;top:659px" width="20" height="20" viewBox="0 0 20 20" ><path d="M0.200 4.300H8.900M0.200 7.400H7.900M0.200 10.300H6.900M0.200 13.400H5M0.200 16.400H7.600" stroke="#565656" fill="none" stroke-width="0.9" /><path d="M7.100 16.400L12.100 3.600H14.100L15.900 10.300H19.900" stroke="#1488d8" fill="none" stroke-width="1.3" /></svg>
<span class="tr" style="left:74.5px;top:661px;letter-spacing:0.338px;">Variable Monitor Table</span>
<div class="hd" style="left:62px;top:689px;width:11px"></div>
<svg style="left:73px;top:679px" width="20" height="20" viewBox="0 0 20 20" ><rect x="2.7" y="1.6" width="14.6" height="17.8" rx="0" stroke="#565656" fill="#fff" stroke-width="1.2"/><path d="M4.100 3.500H15.900M4.100 5.500H15.900M4.100 7.500H15.900M4.100 9.500H15.900M4.100 11.500H15.900M4.100 13.500H15.900M4.100 15.500H15.900M4.100 17.500H10.600" stroke="#1488d8" fill="none" stroke-width="1.1" /></svg>
<div style="left:96px;top:679px;width:38px;height:20px;background:#0078d7"></div>
<span class="tr" style="left:97.5px;top:681px;letter-spacing:0.250px;color:#fff;">MAIN</span>
<div class="hd" style="left:39px;top:709px;width:11px"></div>
<svg style="left:50px;top:699px" width="20" height="20" viewBox="0 0 20 20" ><rect x="0.8" y="1.8" width="17.5" height="17.2" rx="0" stroke="#565656" fill="#fff" stroke-width="1.2"/><path d="M2.500 15.600L15.500 5.200M2.500 5.600L8 10M11 12.600L15.500 15.800" stroke="#1488d8" fill="none" stroke-width="1" /><path d="M13.300 3.600L16.800 5.200L15.600 8.800M13.300 17.400L16.800 15.800L15.600 12.200" stroke="#1488d8" fill="none" stroke-width="1.1" /></svg>
<span class="tr" style="left:74.5px;top:701px;letter-spacing:-0.019px;">Cross Reference Table</span>
<div class="hd" style="left:39px;top:729px;width:11px"></div>
<svg style="left:50px;top:719px" width="20" height="20" viewBox="0 0 20 20" ><path d="M3.100 4.900V16Q3.100 18.500 10 18.500Q16.900 18.500 16.900 16V4.900Z" stroke="none" fill="#666" stroke-width="1" /><ellipse cx="10" cy="4.900" rx="6.900" ry="2.700" fill="#1488d8"/><path d="M3.100 9Q4 11.200 10 11.200Q16 11.200 16.900 9M3.100 13Q4 15.200 10 15.200Q16 15.200 16.900 13" stroke="#fff" fill="none" stroke-width="1.3" /></svg>
<span class="tr" style="left:74.5px;top:721px;letter-spacing:0.113px;">Element Using Infomation Table</span>
<div class="hd" style="left:39px;top:749px;width:11px"></div>
<svg style="left:50px;top:739px" width="20" height="20" viewBox="0 0 20 20" ><rect x="1.8" y="2.7" width="16.5" height="14.4" rx="0" stroke="#565656" fill="#e2e2e2" stroke-width="1.2"/><path d="M2.500 7.500H17.500M2.500 12H17.500M7 3.500V16.500M12.500 3.500V16.500" stroke="#9a9a9a" fill="none" stroke-width="0.9" /><path d="M3.500 9.500Q5 2 7.500 6Q10 10 11 14Q13 19 15.500 10.500" stroke="#1488d8" fill="none" stroke-width="1.4" /></svg>
<span class="tr" style="left:74.5px;top:741px;letter-spacing:-0.030px;">Trace</span>
<div style="left:403px;top:831px;width:599px;height:7px;background:#fff"></div>
<div style="left:405px;top:833px;width:597px;height:1px;background:#f0f0f0"></div>
<div style="left:409px;top:118px;width:593px;height:713px;background:#d4d0c8"></div>
<div style="left:405px;top:114px;width:1px;height:721px;background:#868686"></div>
<div style="left:405px;top:114px;width:597px;height:1px;background:#868686"></div>
<div style="left:406px;top:115px;width:1px;height:719px;background:#696969"></div>
<div style="left:406px;top:115px;width:596px;height:1px;background:#696969"></div>
<div style="left:407px;top:116px;width:1px;height:717px;background:#a0a0a0"></div>
<div style="left:407px;top:116px;width:595px;height:1px;background:#a0a0a0"></div>
<div style="left:408px;top:117px;width:1px;height:715px;background:#696969"></div>
<div style="left:408px;top:117px;width:594px;height:1px;background:#696969"></div>
<div style="left:409px;top:118px;width:593px;height:238px;background:#fff"></div>
<div style="left:409px;top:118px;width:593px;height:16px;background:#f0f0f0;border-top:1px solid #fff"></div>
<div style="left:409px;top:118px;width:52px;height:238px;background:#f0f0f0;border-left:1px solid #fff"></div>
<div style="left:409px;top:134px;width:593px;height:1px;background:#a0a0a0"></div>
<div style="left:410px;top:135px;width:51px;height:1px;background:#fff"></div>
<div style="left:409px;top:151px;width:593px;height:1px;background:#a0a0a0"></div>
<div style="left:410px;top:152px;width:51px;height:1px;background:#fff"></div>
<div style="left:409px;top:168px;width:593px;height:1px;background:#a0a0a0"></div>
<div style="left:410px;top:169px;width:51px;height:1px;background:#fff"></div>
<div style="left:409px;top:185px;width:593px;height:1px;background:#a0a0a0"></div>
<div style="left:410px;top:186px;width:51px;height:1px;background:#fff"></div>
<div style="left:409px;top:202px;width:593px;height:1px;background:#a0a0a0"></div>
<div style="left:410px;top:203px;width:51px;height:1px;background:#fff"></div>
<div style="left:409px;top:219px;width:593px;height:1px;background:#a0a0a0"></div>
<div style="left:410px;top:220px;width:51px;height:1px;background:#fff"></div>
<div style="left:409px;top:236px;width:593px;height:1px;background:#a0a0a0"></div>
<div style="left:410px;top:237px;width:51px;height:1px;background:#fff"></div>
<div style="left:409px;top:253px;width:593px;height:1px;background:#a0a0a0"></div>
<div style="left:410px;top:254px;width:51px;height:1px;background:#fff"></div>
<div style="left:409px;top:270px;width:593px;height:1px;background:#a0a0a0"></div>
<div style="left:410px;top:271px;width:51px;height:1px;background:#fff"></div>
<div style="left:409px;top:287px;width:593px;height:1px;background:#a0a0a0"></div>
<div style="left:410px;top:288px;width:51px;height:1px;background:#fff"></div>
<div style="left:409px;top:304px;width:593px;height:1px;background:#a0a0a0"></div>
<div style="left:410px;top:305px;width:51px;height:1px;background:#fff"></div>
<div style="left:409px;top:321px;width:593px;height:1px;background:#a0a0a0"></div>
<div style="left:410px;top:322px;width:51px;height:1px;background:#fff"></div>
<div style="left:409px;top:338px;width:593px;height:1px;background:#a0a0a0"></div>
<div style="left:410px;top:339px;width:51px;height:1px;background:#fff"></div>
<div style="left:409px;top:355px;width:593px;height:1px;background:#a0a0a0"></div>
<div style="left:409px;top:355px;width:593px;height:2px;background:#808080"></div>
<div style="left:461px;top:118px;width:1px;height:238px;background:#a0a0a0"></div>
<div style="left:462px;top:119px;width:1px;height:15px;background:#fff"></div>
<div style="left:588px;top:118px;width:1px;height:238px;background:#a0a0a0"></div>
<div style="left:589px;top:119px;width:1px;height:15px;background:#fff"></div>
<div style="left:688px;top:118px;width:1px;height:238px;background:#a0a0a0"></div>
<div style="left:689px;top:119px;width:1px;height:15px;background:#fff"></div>
<div style="left:788px;top:118px;width:1px;height:238px;background:#a0a0a0"></div>
<div style="left:789px;top:119px;width:1px;height:15px;background:#fff"></div>
<div style="left:481px;top:135px;width:1px;height:221px;background:#a0a0a0"></div>
<span class="mono" style="left:465px;top:124px">Element Name</span>
<span class="mono" style="left:592px;top:124px">Data Type</span>
<span class="mono" style="left:692px;top:124px">Display Format</span>
<span class="mono" style="left:792px;top:124px">Comment</span>
<span class="mono" style="left:418px;top:143px">1</span>
<span class="mono" style="left:464px;top:143px">...</span>
<span class="mono" style="left:498px;top:143px">M0</span>
<span class="mono" style="left:592px;top:143px">BOOL</span>
<span class="mono" style="left:692px;top:143px">Bin</span>
<span class="mono" style="left:418px;top:160px">2</span>
<span class="mono" style="left:464px;top:160px">...</span>
<span class="mono" style="left:498px;top:160px">M1</span>
<span class="mono" style="left:592px;top:160px">BOOL</span>
<span class="mono" style="left:692px;top:160px">Bin</span>
<span class="mono" style="left:418px;top:177px">3</span>
<span class="mono" style="left:464px;top:177px">...</span>
<span class="mono" style="left:498px;top:177px">M2</span>
<span class="mono" style="left:592px;top:177px">BOOL</span>
<span class="mono" style="left:692px;top:177px">Bin</span>
<span class="mono" style="left:418px;top:194px">4</span>
<span class="mono" style="left:464px;top:194px">...</span>
<span class="mono" style="left:498px;top:194px">M3</span>
<span class="mono" style="left:592px;top:194px">BOOL</span>
<span class="mono" style="left:692px;top:194px">Bin</span>
<span class="mono" style="left:418px;top:211px">5</span>
<span class="mono" style="left:464px;top:211px">...</span>
<span class="mono" style="left:498px;top:211px">M4</span>
<span class="mono" style="left:592px;top:211px">BOOL</span>
<span class="mono" style="left:692px;top:211px">Bin</span>
<span class="mono" style="left:418px;top:228px">6</span>
<span class="mono" style="left:464px;top:228px">...</span>
<span class="mono" style="left:498px;top:228px">M5</span>
<span class="mono" style="left:592px;top:228px">BOOL</span>
<span class="mono" style="left:692px;top:228px">Bin</span>
<span class="mono" style="left:418px;top:245px">7</span>
<span class="mono" style="left:464px;top:245px">...</span>
<span class="mono" style="left:498px;top:245px">D0</span>
<span class="mono" style="left:592px;top:245px">INT</span>
<span class="mono" style="left:692px;top:245px">Dec</span>
<span class="mono" style="left:418px;top:262px">8</span>
<span class="mono" style="left:464px;top:262px">...</span>
<span class="mono" style="left:498px;top:262px">D1</span>
<span class="mono" style="left:592px;top:262px">INT</span>
<span class="mono" style="left:692px;top:262px">Dec</span>
<span class="mono" style="left:418px;top:279px">9</span>
<span class="mono" style="left:464px;top:279px">...</span>
<span class="mono" style="left:498px;top:279px">D2</span>
<span class="mono" style="left:592px;top:279px">INT</span>
<span class="mono" style="left:692px;top:279px">Dec</span>
<span class="mono" style="left:418px;top:296px">10</span>
<span class="mono" style="left:464px;top:296px">...</span>
<span class="mono" style="left:498px;top:296px">D3</span>
<span class="mono" style="left:592px;top:296px">INT</span>
<span class="mono" style="left:692px;top:296px">Dec</span>
<span class="mono" style="left:418px;top:313px">11</span>
<span class="mono" style="left:464px;top:313px">...</span>
<span class="mono" style="left:498px;top:313px">D4</span>
<span class="mono" style="left:592px;top:313px">INT</span>
<span class="mono" style="left:692px;top:313px">Dec</span>
<span class="mono" style="left:418px;top:330px">12</span>
<span class="mono" style="left:464px;top:330px">...</span>
<span class="mono" style="left:498px;top:330px">D5</span>
<span class="mono" style="left:592px;top:330px">INT</span>
<span class="mono" style="left:692px;top:330px">Dec</span>
<span class="mono" style="left:418px;top:347px">13</span>
<span class="mono" style="left:464px;top:347px">...</span>
<span class="mono" style="left:498px;top:347px">D6</span>
<span class="mono" style="left:592px;top:347px">INT</span>
<span class="mono" style="left:692px;top:347px">Dec</span>
<div style="left:789px;top:305px;width:213px;height:16px;background:#0078d7"></div>
<div style="left:402px;top:836px;width:86px;height:1px;background:#000"></div>
<div style="left:422px;top:836px;width:1px;height:2px;background:#000"></div>
<div style="left:487px;top:836px;width:1px;height:2px;background:#000"></div>
<div style="left:579px;top:836px;width:423px;height:1px;background:#000"></div>
<div style="left:579px;top:836px;width:1px;height:2px;background:#000"></div>
<div style="left:452px;top:400px;width:301px;height:255px;background:#f0f0f0;border:1px solid #8c8c8c;box-shadow:0 0 10px 1px rgba(0,0,0,.30)"></div>
<div style="left:453px;top:401px;width:299px;height:25px;background:#fff"></div>
<span class="t" style="left:455.5px;top:406px;font-size:13px;color:#999;letter-spacing:0.333px">ModbusTcp Config</span>
<svg style="left:730px;top:406px" width="14" height="14" viewBox="0 0 14 14"><path d="M2 2 L12 12 M12 2 L2 12" stroke="#555" stroke-width="1" fill="none"/></svg>
<span class="dl" style="left:490.0px;top:458px;color:#000;letter-spacing:-0.005px">IP Address:</span>
<span class="dl" style="left:482.0px;top:495px;color:#000;letter-spacing:-0.049px">Port number:</span>
<span class="dl" style="left:503.0px;top:532px;color:#000;letter-spacing:-0.048px">Timeout:</span>
<span class="dl" style="left:620.0px;top:531px;color:#000;letter-spacing:-0.832px">ms</span>
<span class="dl" style="left:487.0px;top:571px;color:#000;letter-spacing:-0.166px">Enabling control element:</span>
<div style="left:555px;top:452px;width:150px;height:24px;background:#fff;border:1px solid #7a7a7a"></div>
<div style="left:555px;top:491px;width:60px;height:23px;background:#fff;border:1px solid #7a7a7a"></div>
<div style="left:555px;top:527px;width:60px;height:23px;background:#fff;border:1px solid #7a7a7a"></div>
<span class="dl" style="left:566.0px;top:456px">192</span>
<span class="dl" style="left:593.5px;top:456px">.</span>
<span class="dl" style="left:602.0px;top:456px">168</span>
<span class="dl" style="left:629.5px;top:456px">.</span>
<span class="dl" style="left:644.0px;top:456px">1</span>
<span class="dl" style="left:665.5px;top:456px">.</span>
<span class="dl" style="left:674.0px;top:456px">101</span>
<span class="dl" style="left:559px;top:495px">6502</span>
<span class="dl" style="left:559px;top:531px">500</span>
<div style="left:471px;top:570px;width:13px;height:13px;background:#fff;border:1px solid #333"></div>
<div style="left:614px;top:566px;width:60px;height:23px;background:#f0f0f0;border:1px solid #ccc;box-shadow:inset 0 0 0 1px #fff"></div>
<div style="left:684px;top:567px;width:21px;height:21px;background:#ccc;border:1px solid #bfbfbf"></div>
<span class="dl" style="left:688px;top:572px;color:#888;letter-spacing:1px">...</span>
<div style="left:490px;top:609px;width:73px;height:21px;background:#e1e1e1;border:1px solid #adadad"></div>
<div style="left:634px;top:609px;width:73px;height:21px;background:#e1e1e1;border:1px solid #adadad"></div>
<span class="dl" style="left:518.5px;top:613px;color:#000;letter-spacing:-0.197px">OK</span>
<span class="dl" style="left:653.0px;top:613px;color:#000;letter-spacing:-0.207px">Cancel</span>
<svg style="left:0px;top:0px" width="1002" height="838" viewBox="0 0 1002 838" pointer-events="none"><polygon points="713,471.3 731.7,469 728.9,473 785.6,495.9 726.7,479.7 726.4,484" fill="#ed1c24"/><polygon points="620,505.1 638.3,507.9 634.8,511.4 662.5,534.1 631,517 629.6,521.2" fill="#ed1c24"/><polygon points="155.6,633.2 174,629.3 170.5,634.5 259.4,661 169.2,640.3 168.8,644.2" fill="#ed1c24"/></svg>
</body></html>
